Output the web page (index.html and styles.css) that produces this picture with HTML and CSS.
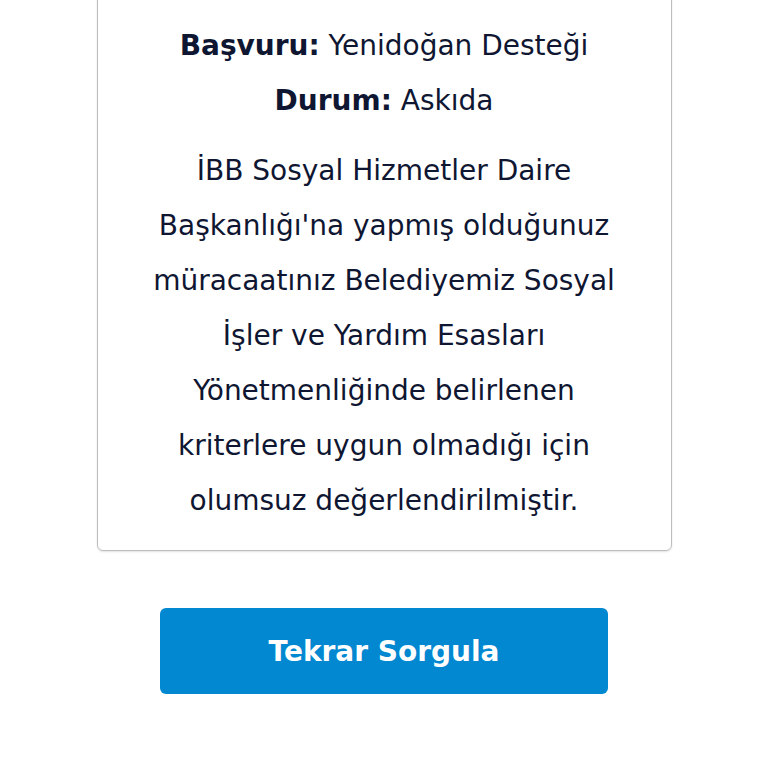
FILE: index.html
```html
<!DOCTYPE html>
<html lang="tr">
<head>
    <meta charset="UTF-8">
    <meta name="viewport" content="width=device-width, initial-scale=1.0">
    <title>Başvuru Sonucu</title>
    <link rel="stylesheet" href="styles.css">
</head>
<body>
    <div class="container">
        <div class="result-card">
            <p class="info"><strong>Başvuru:</strong> Yenidoğan Desteği</p>
            <p class="info"><strong>Durum:</strong> Askıda</p>
            <p class="message">
                İBB Sosyal Hizmetler Daire<br>
                Başkanlığı'na yapmış olduğunuz<br>
                müracaatınız Belediyemiz Sosyal<br>
                İşler ve Yardım Esasları<br>
                Yönetmenliğinde belirlenen<br>
                kriterlere uygun olmadığı için<br>
                olumsuz değerlendirilmiştir.
            </p>
        </div>
        <button class="btn-retry">Tekrar Sorgula</button>
    </div>
</body>
</html>
```

FILE: styles.css
```css
body {
    font-family: "DejaVu Sans", Arial, sans-serif;
    background-color: #fff;
    margin: 0;
    padding: 0;
    color: #0f1632;
}
.container {
    display: flex;
    flex-direction: column;
    align-items: center;
}
.result-card {
    width: 575px;
    box-sizing: border-box;
    margin-top: -8px;
    padding: 25px 10px 22px;
    border: 1px solid #bdbdbd;
    border-radius: 6px;
    box-shadow: 0 1px 2px rgba(0, 0, 0, 0.12);
    text-align: center;
    font-size: 28px;
    line-height: 55px;
}
.result-card p {
    margin: 0;
}
.info strong {
    font-weight: 700;
}
.message {
    margin-top: 15px !important;
}
.btn-retry {
    margin-top: 57px;
    width: 448px;
    height: 86px;
    background: #0288d1;
    color: #fff;
    border: none;
    border-radius: 6px;
    font-family: "DejaVu Sans", Arial, sans-serif;
    font-size: 28px;
    font-weight: 700;
    cursor: pointer;
}
```
